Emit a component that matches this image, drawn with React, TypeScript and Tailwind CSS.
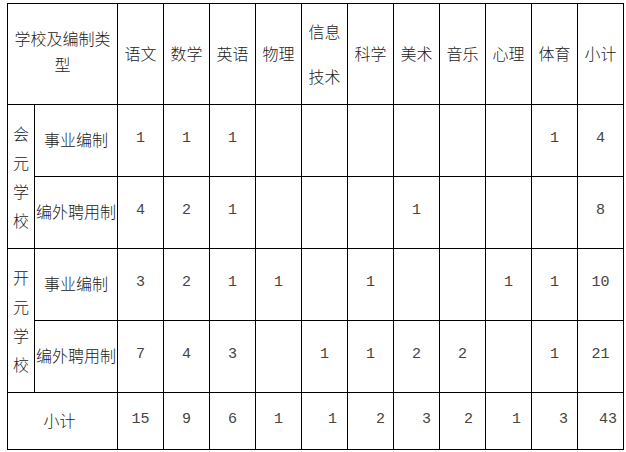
import React from "react";

const subjects = ["语文", "数学", "英语", "物理", "信息技术", "科学", "美术", "音乐", "心理", "体育", "小计"];

type Row = (string | null)[];

const rows: { label: string; data: Row }[] = [
  { label: "事业编制", data: ["1", "1", "1", null, null, null, null, null, null, "1", "4"] },
  { label: "编外聘用制", data: ["4", "2", "1", null, null, null, "1", null, null, null, "8"] },
  { label: "事业编制", data: ["3", "2", "1", "1", null, "1", null, null, "1", "1", "10"] },
  { label: "编外聘用制", data: ["7", "4", "3", null, "1", "1", "2", "2", null, "1", "21"] },
];

const totals = ["15", "9", "6", "1", "1", "2", "3", "2", "1", "3", "43"];
const totalAlign = [
  "justify-center",
  "justify-center",
  "justify-center",
  "justify-center",
  "justify-end pr-[10px]",
  "justify-end pr-[8px]",
  "justify-end pr-[8px]",
  "justify-end pr-[12px]",
  "justify-end pr-[10px]",
  "justify-end pr-[9px]",
  "justify-end pr-[6px]",
];

const cjk = "font-['Noto_Sans_CJK_SC',sans-serif] font-light text-[16px] text-[#222]";
const num = "font-['Liberation_Mono','Noto_Sans_CJK_SC',monospace] text-[15px] text-[#444]";

export default function App() {
  return (
    <div className="w-[626px] h-[452px] bg-white pt-[3px] pl-[7px]">
      <div className="grid w-[617px] bg-black p-px gap-px grid-cols-[26px_82px_repeat(11,45px)] grid-rows-[100px_71px_71px_71px_71px_56px]">
        <div className={`col-span-2 bg-white flex flex-col items-center justify-center leading-[26px] pb-[6px] ${cjk}`}>
          <span>学校及编制类</span>
          <span>型</span>
        </div>
        {subjects.map((s) =>
          s === "信息技术" ? (
            <div key={s} className={`bg-white flex flex-col items-center justify-center gap-[23px] pb-[1px] leading-[22px] ${cjk}`}>
              <span>信息</span>
              <span>技术</span>
            </div>
          ) : (
            <div key={s} className={`bg-white flex items-center justify-center pb-[2px] ${cjk}`}>
              {s}
            </div>
          )
        )}

        {rows.map((r, i) => (
          <React.Fragment key={i}>
            {i % 2 === 0 && (
              <div className={`row-span-2 bg-white flex flex-col items-center justify-center leading-[29px] ${cjk}`}>
                {(i === 0 ? "会元学校" : "开元学校").split("").map((c, k) => (
                  <span key={k}>{c}</span>
                ))}
              </div>
            )}
            <div className={`bg-white flex items-center justify-center pb-[3px] whitespace-nowrap ${cjk}`}>
              {r.label}
            </div>
            {r.data.map((d, j) => (
              <div key={j} className={`bg-white flex items-center justify-center pb-[3px] ${num}`}>
                {d}
              </div>
            ))}
          </React.Fragment>
        ))}

        <div className={`col-span-2 bg-white flex items-center justify-center pr-[6px] pb-[2px] ${cjk}`}>小计</div>
        {totals.map((t, j) => (
          <div key={j} className={`bg-white flex items-center pb-[1px] ${totalAlign[j]} ${num}`}>
            {t}
          </div>
        ))}
      </div>
    </div>
  );
}
